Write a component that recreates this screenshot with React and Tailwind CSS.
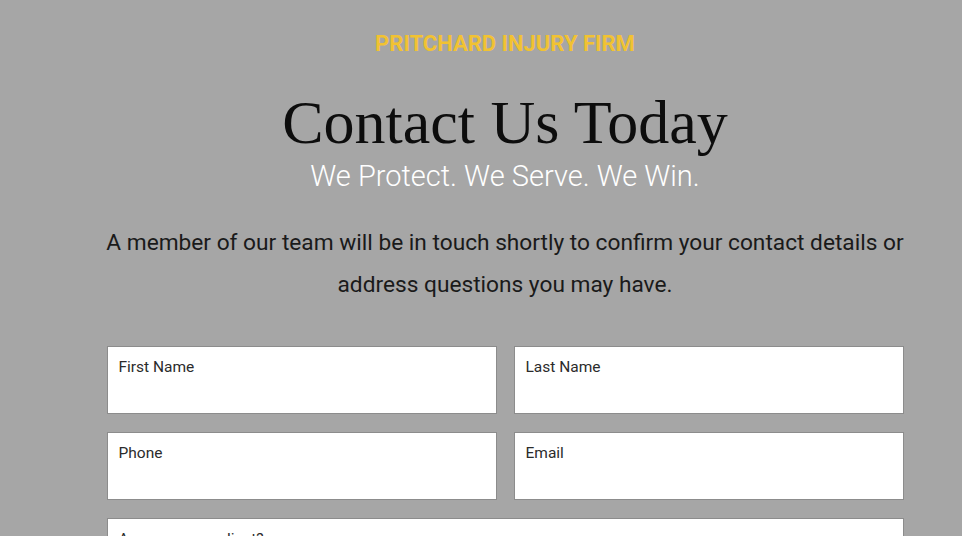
import React from "react";

export default function App() {
  const rows = [
    ["First Name", "Last Name"],
    ["Phone", "Email"],
  ];

  return (
    <div className="h-[536px] overflow-hidden bg-[#a6a6a6] pl-[48px] font-['Roboto',sans-serif]">
      <div className="flex flex-col items-center">
        <p className="mt-[30px] text-[22px] leading-[28px] font-bold text-[#f1c232]">
          PRITCHARD INJURY FIRM
        </p>
        <h1 className="mt-[31px] font-['Liberation_Serif',serif] text-[62px] leading-[66px] text-[#0d0d0d]">
          Contact Us Today
        </h1>
        <p className="mt-[3px] text-[29px] leading-[36px] font-light text-white">
          We Protect. We Serve. We Win.
        </p>
        <p className="mt-[28px] w-[820px] text-center text-[22.7px] leading-[42px] text-[#1a1a1a]">
          A member of our team will be in touch shortly to confirm your contact details or address questions you may have.
        </p>
        <form className="mt-[40px] w-[797px] flex flex-col gap-[18px]">
          {rows.map((row) => (
            <div key={row[0]} className="grid grid-cols-2 gap-[17px]">
              {row.map((label) => (
                <label key={label} className="h-[68px] bg-white border border-[#8c8c8c] px-[11px] pt-[8px] block">
                  <span className="text-[15.5px] leading-[18px] text-[#2b2b2b]">{label}</span>
                </label>
              ))}
            </div>
          ))}
          <label className="h-[68px] bg-white border border-[#8c8c8c] px-[11px] pt-[8px] block">
            <span className="text-[15.5px] leading-[18px] text-[#2b2b2b]">Are you a new client?</span>
          </label>
        </form>
      </div>
    </div>
  );
}
